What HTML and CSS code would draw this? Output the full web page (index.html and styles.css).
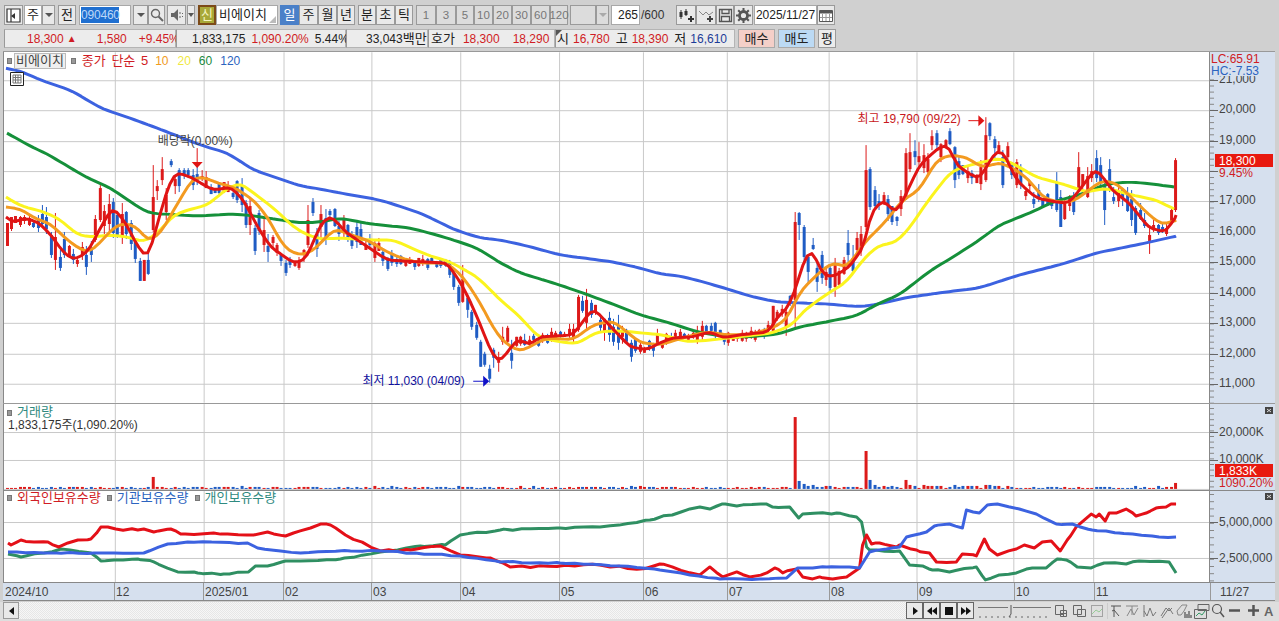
FILE: index.html
```html
<!DOCTYPE html>
<html lang="ko">
<head>
    <meta charset="UTF-8">
    <title>비에이치 차트</title>
    <link rel="stylesheet" href="styles.css">
</head>
<body>
  <div class="toolbar">
    <button class="btn w19"><svg width="15" height="15" viewBox="0 0 15 15"><path d="M1 1h13v13H1zM5 1v13" fill="#fff" stroke="#333" stroke-width="1.200"/><path d="M9 5l-4 3 4 3z" fill="#333"/></svg></button>
    <div class="box w18 ml1 ko">주</div>
    <button class="btn w13"><span class="caret"></span></button>
    <button class="btn w18 ml3 ko">전</button>
    <div class="box code ml3"><span class="selected">090460</span></div>
    <button class="btn w15 ml2"><span class="caret"></span></button>
    <button class="btn w17"><svg width="14" height="14" viewBox="0 0 14 14"><circle cx="5.500" cy="5.500" r="4" fill="none" stroke="#666" stroke-width="1.400"/><path d="M8.500 8.500l4.500 4.500" stroke="#666" stroke-width="2"/></svg></button>
    <button class="btn w19 ml2"><svg width="14" height="14" viewBox="0 0 14 14"><path d="M1 5h3l4-4v12l-4-4H1z" fill="#666"/><path d="M10 4v2M10 8v2M12.500 5v1M12.500 8v1" stroke="#666"/></svg></button>
    <button class="btn w8 ml1"><span class="caret small"></span></button>
    <div class="sin ml3 ko">신</div>
    <div class="box name ko">비에이치<span class="corner"></span></div>
    <button class="btn w19 ml2 active ko">일</button>
    <button class="btn w19 ko">주</button>
    <button class="btn w19 ko">월</button>
    <button class="btn w18 ko">년</button>
    <button class="btn w18 ml3 ko">분</button>
    <button class="btn w19 ko">초</button>
    <button class="btn w18 ko">틱</button>
    <button class="btn w20 ml3 off">1</button>
    <button class="btn w20 off">3</button>
    <button class="btn w18 off">5</button>
    <button class="btn w19 off">10</button>
    <button class="btn w19 off">20</button>
    <button class="btn w19 off">30</button>
    <button class="btn w19 off">60</button>
    <button class="btn w18 off">120</button>
    <div class="btn w26 ml2 off"></div>
    <button class="btn w13 off"><span class="caret pale"></span></button>
    <div class="box count ml2">265</div>
    <span class="total">/600</span>
    <button class="btn w20 ml11"><svg width="16" height="15" viewBox="0 0 16 15"><path d="M3 2v9M8 1v7" stroke="#333"/><path d="M1.500 4h3v5h-3zM6.500 3h3v4h-3z" fill="#333"/><path d="M13 8v6M10 11h6" stroke="#333" stroke-width="2"/></svg></button>
    <button class="btn w20"><svg width="16" height="15" viewBox="0 0 16 15"><path d="M1 3l4 4 3-3 3 3 4-3" fill="none" stroke="#888"/><path d="M12 8v6M9 11h6" stroke="#444" stroke-width="2"/></svg></button>
    <button class="btn w18"><svg width="15" height="15" viewBox="0 0 15 15"><path d="M1.500 1.500h12v12h-12zM4 1.500v4h7v-4M3.500 13.500v-5h8v5" fill="none" stroke="#555" stroke-width="1.300"/></svg></button>
    <button class="btn w19"><svg width="15" height="15" viewBox="0 0 15 15"><circle cx="7.500" cy="7.500" r="4" fill="none" stroke="#555" stroke-width="2.800"/><path d="M7.500 0v3M7.500 12v3M0 7.500h3M12 7.500h3M2.200 2.200l2 2M10.800 10.800l2 2M12.800 2.200l-2 2M4.200 10.800l-2 2" stroke="#555" stroke-width="2"/></svg></button>
    <div class="box date ml1">2025/11/27</div>
    <button class="btn w18"><svg width="14" height="13" viewBox="0 0 14 13"><path d="M.5 1.500h13v11H.5z" fill="#fff" stroke="#555"/><path d="M.5 2h13v2.500H.5z" fill="#555"/><path d="M3.500 5v7M7 5v7M10.500 5v7M1 8.500h12" stroke="#999"/></svg></button>
  </div>

  <div class="quotes">
    <div class="cell price-cell">
      <span class="red v1">18,300</span><span class="red tri">▲</span><span class="red v2">1,580</span><span class="red v3">+9.45%</span>
    </div>
    <div class="cell volume-cell">
      <span class="v4">1,833,175</span><span class="red v5">1,090.20%</span><span class="v6">5.44%</span>
    </div>
    <div class="cell money-cell"><span class="v7">33,043<span class="ko">백만</span></span></div>
    <div class="cell ask-cell">
      <span class="v8 ko">호가</span><span class="red v9">18,300</span><span class="red v10">18,290</span>
    </div>
    <div class="cell ohlc-cell">
      <span class="mark"></span><span class="v11 ko">시</span><span class="red v12">16,780</span><span class="v13 ko">고</span><span class="red v12">18,390</span><span class="v13 ko">저</span><span class="navy v12">16,610</span>
    </div>
    <button class="trade buy ko">매수</button>
    <button class="trade sell ko">매도</button>
    <button class="btn w18 ml3 plain ko">평</button>
  </div>

  <div class="chart">
    <div class="panel price-panel">
      <div class="plot">
        <svg id="price-plot" class="plot-svg"></svg>
        <div class="legend">
          <span class="dot"></span><span class="legend-name ko">비에이치</span><span class="dot ml5"></span>
          <span class="red ml6 ko spaced">종가 단순 5</span><span class="orange ml7">10</span><span class="yellow ml9">20</span><span class="green ml8">60</span><span class="blue ml8">120</span>
        </div>
        <div class="grid-icon">
          <svg width="14" height="14" viewBox="0 0 14 14"><path d="M.5.500h13v13H.5z" fill="#fff" stroke="#222"/><path d="M3 3h8v8H3zM3 5.500h8M3 8h8M5.500 3v8M8 3v8" fill="none" stroke="#777"/></svg>
        </div>
      </div>
      <div class="axis"><svg id="price-axis" class="axis-svg"></svg></div>
    </div>
    <div class="panel volume-panel">
      <div class="plot">
        <svg id="volume-plot" class="plot-svg"></svg>
        <div class="legend volume-legend">
          <div><span class="dot"></span><span class="teal ml5 ko">거래량</span></div>
          <div class="volume-value">1,833,175주(1,090.20%)</div>
        </div>
      </div>
      <div class="axis"><svg id="volume-axis" class="axis-svg"></svg></div>
    </div>
    <div class="panel holdings-panel">
      <div class="plot">
        <svg id="holdings-plot" class="plot-svg"></svg>
        <div class="legend holdings-legend">
          <span class="dot"></span><span class="red ml5 ko">외국인보유수량</span>
          <span class="dot ml6"></span><span class="blue ml5 ko">기관보유수량</span>
          <span class="dot ml6"></span><span class="teal ml5 ko">개인보유수량</span>
        </div>
      </div>
      <div class="axis"><svg id="holdings-axis" class="axis-svg"></svg></div>
    </div>
    <div class="panel dates-panel">
      <svg id="dates" class="dates-svg"></svg>
    </div>
  </div>

  <div class="scroller">
    <button class="btn scroll-left"><span class="tri-left"></span></button>
    <div class="track"></div>
    <button class="btn play"><svg width="10" height="10" viewBox="0 0 10 10"><path d="M3 1l5 4-5 4z" fill="#111"/></svg></button>
    <button class="btn play"><svg width="10" height="10" viewBox="0 0 10 10"><path d="M5 1L0 5l5 4zM10 1L5 5l5 4z" fill="#111"/></svg></button>
    <button class="btn play"><svg width="10" height="10" viewBox="0 0 10 10"><path d="M1 1h8v8H1z" fill="#111"/></svg></button>
    <button class="btn play"><svg width="10" height="10" viewBox="0 0 10 10"><path d="M0 1l5 4-5 4zM5 1l5 4-5 4z" fill="#111"/></svg></button>
    <svg class="slider" width="76" height="18" viewBox="0 0 76 18">
      <path d="M0 5.500h30M35 5.500h38" stroke="#777"/><path d="M33 3v9l-2 3" fill="none" stroke="#555"/>
      <path d="M2 14v2M8 14v2M14 14v2M20 14v2M26 14v2M32 14v2M38 14v2M44 14v2M50 14v2M56 14v2M62 14v2M68 14v2" stroke="#666"/>
    </svg>
    <svg class="tools" width="222" height="18" viewBox="0 0 222 18">
      <g fill="none" stroke="#666">
        <path d="M1.500 3.500h8v9h-8zM6.500 8.500h6v6h-6zM9.500 8.500v6M6.500 11.500h6"/>
        <path d="M19.500 3.500h8v9h-8zM23.500 7.500h8v7h-8z"/>
        <path d="M37.500 3.500h11v11h-11z" stroke-dasharray="1 1"/><path d="M38 12l4-4 3 2 3-3" stroke="#9c9"/>
        <path d="M53.500 1v16" stroke="#ccc"/>
        <path d="M57 4h10M60 4v11M60 8l5 6M60 8l-2 1" stroke="#555"/>
        <path d="M72 4h12M73 14l4-7 3 6 4-7M78 4v9" stroke="#888"/>
        <path d="M90 15V3M90 9l3 5 3-8 3 8 3-4" stroke="#777"/>
        <path d="M107 14l5-8 3 3 3-3M108 16l7-10 4 6" stroke="#777"/>
        <path d="M123 9l5-6h5l-3 6-3 4h-3z" stroke="#888"/><path d="M131 10v6M133 12v4M135 9v7M137 13v3" stroke="#333"/>
        <path d="M144 2.500h11v6h-11zM140.500 7.500h12v9h-12z" stroke="#666"/><path d="M142 14l3-3 3 2 3-4" stroke="#396"/>
        <circle cx="163" cy="7" r="4.500" stroke="#555" stroke-width="1.200"/><path d="M166 10l4 5" stroke="#555" stroke-width="1.500"/>
      </g>
      <path d="M175 8.500h11M194 8.500h11M199.500 3v11" stroke="#555" stroke-width="2.500" fill="none"/>
      <text x="210" y="14" class="tool-a">A</text>
    </svg>
  </div>
  <script src="chart.js"></script>
</body>
</html>
```

FILE: styles.css
```css
* {
  box-sizing: border-box;
}
html, body {
  margin: 0;
  height: 621px;
  overflow: hidden;
}
body {
  background: #d0d0d0;
  font-family: "Liberation Sans", "Noto Sans CJK KR", sans-serif;
  font-size: 12px;
  color: #222;
}
button {
  font: inherit;
  color: inherit;
}
.ko {
  font-size: 13px;
  line-height: 14px;
}
.toolbar {
  display: flex;
  height: 20px;
  margin: 5px 0 0 4px;
}
.btn {
  display: flex;
  align-items: center;
  justify-content: center;
  height: 20px;
  padding: 0;
  background: #e9e9e9;
  border: 1px solid #9a9a9a;
  border-radius: 0;
  font-size: 12px;
  flex: none;
}
.btn.ko {
  font-size: 13px;
}
.box {
  display: flex;
  align-items: center;
  justify-content: center;
  height: 20px;
  background: #fff;
  border: 1px solid #a8a8a8;
  flex: none;
}
.w8 { width: 8px; }
.w13 { width: 13px; }
.w15 { width: 15px; }
.w17 { width: 17px; }
.w18 { width: 18px; }
.w19 { width: 19px; }
.w20 { width: 20px; }
.w26 { width: 26px; }
.ml1 { margin-left: 1px; }
.ml2 { margin-left: 2px; }
.ml3 { margin-left: 3px; }
.ml4 { margin-left: 4px; }
.ml5 { margin-left: 5px; }
.ml6 { margin-left: 6px; }
.ml7 { margin-left: 7px; }
.ml8 { margin-left: 8px; }
.ml9 { margin-left: 9px; }
.ml11 { margin-left: 11px; }
.spaced {
  word-spacing: 2px;
}
.caret {
  width: 0;
  height: 0;
  border-left: 4px solid transparent;
  border-right: 4px solid transparent;
  border-top: 4px solid #555;
}
.caret.small {
  border-left-width: 3px;
  border-right-width: 3px;
}
.caret.pale {
  border-top-color: #aaa;
}
.code {
  width: 52px;
  justify-content: flex-start;
  padding-left: 1px;
}
.selected {
  background: #1f6fd0;
  color: #bcd8f8;
  width: 38px;
  line-height: 16px;
  letter-spacing: -0.200px;
}
.sin {
  width: 18px;
  height: 20px;
  background: #a8a838;
  border: 2px solid #7c4a18;
  color: #f4f4c0;
  text-align: center;
  line-height: 16px;
  flex: none;
}
.name {
  position: relative;
  width: 62px;
  justify-content: flex-start;
  padding-left: 2px;
}
.corner {
  position: absolute;
  right: 1px;
  bottom: 1px;
  width: 0;
  height: 0;
  border-left: 7px solid transparent;
  border-bottom: 7px solid #bbb;
}
.active {
  background: #4a80c8;
  border-color: #4a80c8;
  color: #fff;
}
.off {
  background: #dcdcdc;
  color: #777;
  font-size: 11.500px;
}
.count {
  width: 29px;
  justify-content: flex-end;
  padding-right: 1px;
}
.total {
  width: 25px;
  line-height: 20px;
  color: #333;
  padding-left: 1px;
}
.date {
  width: 63px;
}
.quotes {
  display: flex;
  height: 19px;
  margin: 4px 0 0 4px;
}
.cell {
  display: flex;
  align-items: center;
  height: 19px;
  background: #ececec;
  border: 1px solid #b4b4b4;
  border-left-color: #999;
  flex: none;
  white-space: nowrap;
}
.cell span {
  flex: none;
}
.price-cell { width: 172px; }
.volume-cell { width: 170px; }
.money-cell { width: 82px; }
.ask-cell { width: 127px; }
.ohlc-cell { width: 180px; position: relative; }
.v1 { margin-left: 22px; }
.tri { margin-left: 3px; font-size: 10px; width: 11px; }
.v2 { margin-left: 19px; }
.v3 { margin-left: 12px; }
.v4 { margin-left: 15px; }
.v5 { margin-left: 6px; }
.v6 { margin-left: 6px; }
.v7 { margin-left: 19px; }
.v8 { margin-left: 2px; }
.v9 { margin-left: 8px; }
.v10 { margin-left: 13px; }
.v11 { margin-left: 1px; }
.v12 { margin-left: 4px; }
.v13 { margin-left: 6px; }
.mark {
  position: absolute;
  left: 0;
  top: 0;
  width: 0;
  height: 0;
  border-top: 6px solid #555;
  border-right: 6px solid transparent;
}
.trade {
  height: 19px;
  width: 37px;
  margin-left: 3px;
  padding: 0;
  border: 1px solid #aaa;
  flex: none;
}
.buy { background: #f4cfc8; }
.sell { background: #bcdaf4; }
.plain {
  height: 19px;
  background: #ececec;
}
.red { color: #d01c24; }
.navy { color: #1c3c98; }
.orange { color: #f09a1c; }
.yellow { color: #f0e840; }
.green { color: #1a8a40; }
.blue { color: #2c64c0; }
.teal { color: #2f8a80; }

.chart {
  margin: 3px 4px 0 3px;
  border-top: 1px solid #999;
  background: #fff;
}
.panel {
  display: flex;
}
.price-panel { height: 352px; border-bottom: 1px solid #999; }
.volume-panel { height: 87px; border-bottom: 1px solid #888; }
.holdings-panel { height: 92px; border-bottom: 1px solid #888; }
.dates-panel { height: 18px; border-bottom: 1px solid #888; }
.plot {
  position: relative;
  flex: 1;
  border-left: 1px solid #888;
  overflow: hidden;
}
.plot-svg {
  display: block;
  width: 100%;
  height: 100%;
}
.axis {
  width: 66px;
  background: #d6e0ee;
  border-left: 1px solid #888;
  flex: none;
}
.axis-svg {
  display: block;
  width: 100%;
  height: 100%;
}
.dates-svg {
  display: block;
  width: 100%;
  height: 100%;
  background: #d6e0ee;
}
.legend {
  position: absolute;
  left: 3px;
  top: 1px;
  display: flex;
  align-items: center;
  white-space: nowrap;
}
.dot {
  display: inline-block;
  width: 5px;
  height: 6px;
  background: #999;
  border: 1px solid #777;
  flex: none;
}
.legend-name {
  margin-left: 2px;
  padding: 0 1px;
  background: #efefef;
  border: 1px solid #bbb;
  color: #444;
}
.grid-icon {
  position: absolute;
  left: 6px;
  top: 20px;
  line-height: 0;
}
.volume-legend {
  display: block;
  top: 1px;
  line-height: 13px;
}
.volume-value {
  margin-left: 1px;
  color: #333;
}
.holdings-legend {
  top: 0;
}
svg text {
  font-family: "Liberation Sans", "Noto Sans CJK KR", sans-serif;
  font-size: 12px;
}
.tick-label { fill: #444; }
.tag-label { fill: #fff; }
.lc-label { fill: #d01c24; }
.hc-label { fill: #2c64c0; }
.date-label { fill: #444; }
.note-gray { fill: #444; }
.note-red { fill: #c81820; }
.note-navy { fill: #10109c; }
svg text.note-big {
  font-size: 13px;
}
svg text.tool-a {
  fill: #666;
  font-weight: bold;
  font-size: 13px;
}

.scroller {
  display: flex;
  align-items: flex-start;
  height: 20px;
  margin-top: 1px;
  padding-left: 3px;
  background: #dedede;
}
.scroll-left {
  width: 16px;
  height: 17px;
}
.tri-left {
  width: 0;
  height: 0;
  border-top: 4px solid transparent;
  border-bottom: 4px solid transparent;
  border-right: 5px solid #111;
}
.track {
  width: 887px;
  height: 17px;
  background: repeating-conic-gradient(#e6e6e6 0 25%, #f6f6f6 0 50%) 0 0 / 2px 2px;
}
.play {
  width: 17px;
  height: 17px;
  border-color: #666;
}
.slider {
  margin-left: 4px;
  flex: none;
}
.tools {
  flex: none;
}
```

FILE: chart.js
```js
const NS = "http://www.w3.org/2000/svg";

// price panel lines, page coordinates read off the screen
const ma120 = [[5,68],[20,71],[40,80],[70,90],[100,108],[135,120],[167,132],[200,145],[227,153],[253,170],[283,180],[300,186],[320,189],[340,193],[380,200],[420,213],[455,230],[480,238],[500,240],[527,246],[560,255],[613,262],[640,268],[660,274],[680,276],[707,283],[727,289],[753,297],[777,302],[797,303],[827,304],[860,307],[880,304],[905,298],[940,293],[980,288],[1020,275],[1040,270],[1067,263],[1097,253],[1147,243],[1177,236]];
const ma60 = [[6,133],[33,148],[43,152],[70,168],[87,178],[110,188],[127,200],[147,213],[197,216],[230,214],[247,215],[267,218],[300,223],[320,222],[340,218],[370,224],[410,228],[440,236],[453,240],[477,248],[500,263],[520,273],[553,283],[580,292],[607,302],[640,315],[673,324],[697,332],[727,337],[750,337],[780,334],[800,327],[827,322],[857,316],[880,303],[900,295],[915,283],[932,270],[957,255],[980,240],[1000,225],[1033,212],[1053,202],[1080,195],[1107,184],[1127,182],[1147,183],[1175,187]];
const ma20 = [[5,197],[20,206],[40,211],[57,218],[77,235],[90,237],[110,235],[127,237],[143,242],[157,233],[173,215],[187,210],[207,205],[227,188],[240,183],[253,193],[273,208],[293,227],[307,235],[320,239],[340,238],[370,240],[393,240],[427,255],[450,262],[477,277],[500,300],[520,317],[533,332],[540,338],[560,342],[577,344],[597,332],[620,331],[640,333],[663,335],[687,342],[713,340],[740,337],[773,333],[793,325],[803,312],[823,297],[847,282],[863,260],[878,246],[897,242],[910,228],[927,203],[950,173],[963,167],[983,162],[1000,158],[1013,163],[1037,177],[1067,185],[1087,192],[1107,188],[1133,195],[1157,200],[1175,209]];
const ma10 = [[5,207],[20,209],[33,218],[50,224],[63,237],[77,248],[88,253],[100,242],[113,227],[123,223],[137,227],[147,242],[160,233],[173,210],[192,178],[203,177],[217,183],[233,187],[253,200],[267,217],[283,247],[297,255],[310,253],[320,243],[335,228],[350,235],[367,240],[383,250],[400,258],[420,263],[447,263],[463,277],[480,303],[493,328],[503,342],[520,352],[533,345],[547,338],[573,340],[593,325],[613,321],[633,337],[640,343],[660,345],[683,338],[707,332],[727,335],[750,335],[773,328],[787,320],[800,292],[817,275],[833,262],[847,268],[867,240],[883,225],[903,200],[920,190],[937,160],[950,155],[967,157],[983,168],[1000,162],[1017,170],[1030,180],[1043,197],[1057,202],[1073,202],[1090,190],[1103,180],[1117,183],[1133,198],[1150,215],[1163,225],[1177,220]];
const ma5 = [[5,217],[13,223],[23,218],[37,222],[50,235],[63,253],[73,260],[87,252],[100,227],[112,207],[125,223],[137,247],[147,258],[157,223],[167,187],[175,172],[190,177],[207,187],[213,190],[230,187],[243,200],[257,227],[270,247],[293,263],[305,260],[320,225],[330,215],[345,232],[357,240],[387,260],[400,261],[447,263],[463,287],[477,317],[490,350],[498,363],[507,353],[517,339],[530,345],[540,337],[573,335],[593,308],[607,323],[630,347],[647,350],[660,343],[673,338],[693,337],[710,332],[723,338],[740,335],[770,332],[777,317],[787,310],[797,287],[803,263],[812,249],[823,275],[833,277],[850,267],[867,242],[870,215],[883,200],[897,213],[907,193],[920,165],[940,147],[950,145],[955,163],[967,172],[980,179],[997,150],[1005,153],[1017,180],[1037,198],[1057,202],[1070,203],[1080,190],[1097,168],[1113,190],[1130,203],[1150,228],[1167,232],[1177,215]];

// holdings panel
const foreign = [[7,543],[10,545],[20,540],[33,542],[47,542],[58,547],[67,543],[77,540],[90,539],[100,527],[107,527],[115,529],[137,530],[143,529],[153,532],[170,529],[180,534],[200,534],[213,533],[227,534],[253,535],[267,532],[285,536],[293,533],[310,528],[320,524],[330,525],[345,535],[380,551],[410,550],[440,546],[460,555],[490,558],[510,567],[560,566],[600,565],[640,569],[660,564],[700,575],[710,567],[723,577],[737,572],[750,577],[767,573],[775,568],[783,573],[797,569],[803,577],[813,579],[820,577],[833,579],[847,577],[860,568],[863,545],[867,535],[872,544],[880,543],[897,547],[900,545],[917,550],[930,553],[937,562],[957,562],[963,554],[977,556],[985,539],[990,549],[998,555],[1017,549],[1025,545],[1035,548],[1043,542],[1052,541],[1061,551],[1068,540],[1077,527],[1092,514],[1097,517],[1100,514],[1106,521],[1110,513],[1117,513],[1127,509],[1137,516],[1147,513],[1157,508],[1167,507],[1172,504],[1177,504]];
const institution = [[7,552],[43,553],[93,553],[143,553],[167,544],[187,542],[247,543],[257,548],[280,551],[300,553],[350,551],[380,551],[460,556],[500,562],[560,563],[620,566],[660,570],[690,575],[720,579],[760,579],[787,578],[798,568],[813,568],[827,567],[860,568],[870,552],[887,549],[900,547],[907,537],[927,532],[935,526],[950,524],[963,528],[967,510],[980,513],[988,505],[998,504],[1020,509],[1037,514],[1057,524],[1073,524],[1093,530],[1120,533],[1153,536],[1160,537],[1177,537]];
const retail = [[7,554],[20,557],[43,553],[60,549],[90,553],[100,561],[137,559],[153,562],[177,572],[197,573],[223,574],[248,572],[255,566],[267,566],[285,561],[300,561],[340,559],[380,552],[420,546],[445,545],[460,535],[500,530],[560,528],[600,527],[650,520],[700,507],[710,509],[722,504],[737,506],[767,504],[773,507],[790,507],[799,518],[803,514],[837,513],[857,517],[862,522],[867,547],[870,550],[900,551],[910,565],[923,566],[933,570],[950,572],[977,567],[986,580],[1000,575],[1017,573],[1033,568],[1047,568],[1058,559],[1067,560],[1078,567],[1092,568],[1105,563],[1127,564],[1140,561],[1170,562],[1177,573]];

// candles that stand out: x, body top, body bottom, wick top, wick bottom, up?
const bigCandles = [
  [6,223,246,223,246,1],[50,235,255,232,258,0],[54,237,260,213,270,1],[59,257,268,250,271,0],[95,219,240,215,242,1],[100,188,220,185,222,1],
  [113,202,233,198,238,0],[117,215,235,212,238,0],[138,261,281,258,281,0],[143,260,281,260,281,1],[152,197,230,165,232,1],[156,186,191,180,200,1],
  [162,169,180,157,185,1],[170,161,165,159,167,0],[178,170,186,168,192,0],[245,203,225,200,228,0],[254,228,251,225,255,0],[285,263,273,260,276,0],
  [307,220,245,205,248,1],[312,202,213,198,216,0],[449,263,275,260,278,0],[453,273,287,270,290,0],[459,287,303,285,306,0],[467,298,310,296,318,0],
  [472,312,327,310,330,0],[475,325,338,322,340,0],[480,342,367,340,367,0],[484,354,365,352,367,0],[489,369,379,365,383,0],[493,350,358,348,368,0],
  [498,358,363,352,372,1],[503,337,342,327,345,1],[506,328,342,326,345,1],[577,297,330,295,332,1],[582,301,311,296,313,0],[592,303,315,300,318,0],
  [772,306,333,306,336,1],[795,222,300,212,330,1],[799,213,225,212,240,0],[803,227,257,225,262,0],[808,257,272,255,283,0],[817,268,282,262,292,0],
  [830,268,288,265,292,0],[834,265,287,258,297,1],[848,243,255,230,262,0],[857,238,250,232,256,1],[866,170,227,145,230,1],[870,169,207,167,210,0],
  [874,190,206,186,208,0],[905,153,197,148,200,1],[910,152,169,133,172,1],[914,151,157,140,165,0],[932,136,145,130,150,1],[936,133,145,130,150,0],
  [954,147,180,146,188,0],[986,135,180,117,182,1],[990,123,136,122,140,0],[994,139,148,136,160,0],[1003,157,185,150,188,0],[1057,183,210,172,212,0],
  [1062,197,227,190,227,0],[1066,203,219,198,220,1],[1078,167,188,152,192,1],[1096,158,178,150,182,0],[1105,185,210,178,225,0],[1136,208,233,206,235,0],
  [1150,235,241,228,254,1],[1172,210,222,208,225,1],[1177,160,210,158,212,1]
];
const bigVolumes = { 152: 12, 796: 72, 800: 8, 804: 5, 866: 38, 870: 9, 874: 4, 884: 3, 906: 9, 910: 4, 986: 4, 1176: 6 };

const RED = "#e01414";
const CANDLE_RED = "#dc1a1a";
const CANDLE_BLUE = "#1f5cc4";
const GRID = "#c9c9c9";
const MONTHS = [114, 203, 283, 371, 460, 559, 643, 727, 829, 917, 1014, 1094];
const STEP = 4.435;

function make(tag, attrs, parent, text) {
  const el = document.createElementNS(NS, tag);
  for (const key in attrs) el.setAttribute(key, attrs[key]);
  if (text) el.textContent = text;
  parent.appendChild(el);
  return el;
}

function line(parent, x1, y1, x2, y2, color, width) {
  make("line", { x1, y1, x2, y2, stroke: color, "stroke-width": width || 1 }, parent);
}

function polyline(parent, points, color, width) {
  make("polyline", {
    points: points.map(p => p.join(",")).join(" "),
    fill: "none",
    stroke: color,
    "stroke-width": width,
    "stroke-linejoin": "round"
  }, parent);
}

function label(parent, x, y, text, cls) {
  make("text", { x, y, class: cls }, parent, text);
}

function setView(id, x, y, w, h) {
  const svg = document.getElementById(id);
  svg.setAttribute("viewBox", x + " " + y + " " + w + " " + h);
  return svg;
}

function interp(points, x) {
  if (x <= points[0][0]) return points[0][1];
  for (let i = 1; i < points.length; i++) {
    if (x <= points[i][0]) {
      const a = points[i - 1], b = points[i];
      return a[1] + (b[1] - a[1]) * (x - a[0]) / (b[0] - a[0]);
    }
  }
  return points[points.length - 1][1];
}

// fixed seed, so the picture is the same on every load
let seed = 90460;
function rnd() {
  seed = (seed * 16807) % 2147483647;
  return seed / 2147483647;
}

// one sample per candle, rounded off with a 1-2-1 filter
function smooth(points, passes) {
  const first = points[0][0], last = points[points.length - 1][0];
  let out = [];
  for (let x = first; x < last; x += STEP) out.push([x, interp(points, x)]);
  out.push([last, points[points.length - 1][1]]);
  for (let p = 0; p < passes; p++) {
    out = out.map((pt, i) => {
      if (i === 0 || i === out.length - 1) return pt;
      return [pt[0], (out[i - 1][1] + 2 * pt[1] + out[i + 1][1]) / 4];
    });
  }
  return out.map(pt => [+pt[0].toFixed(1), +pt[1].toFixed(1)]);
}

// keeps the sharp points, adds the day to day wobble between them
function wobble(points, size) {
  const xs = points.map(p => p[0]);
  for (let x = points[0][0]; x < points[points.length - 1][0]; x += STEP * 2) {
    if (!xs.some(k => Math.abs(k - x) < 3)) xs.push(+x.toFixed(1));
  }
  xs.sort((a, b) => a - b);
  return xs.map(x => {
    const known = points.some(p => p[0] === x);
    return [x, +(interp(points, x) + (known ? 0 : (rnd() - 0.5) * size)).toFixed(1)];
  });
}

function grid(svg, rows, top, bottom) {
  rows.forEach(y => line(svg, 3, y + 0.5, 1210, y + 0.5, GRID));
  MONTHS.forEach(x => line(svg, x + 0.5, top, x + 0.5, bottom, GRID));
}

function buildCandles() {
  const list = [];
  for (let i = 0; i < 265; i++) {
    const x = Math.round(5.5 + i * STEP);
    const big = bigCandles.find(c => Math.abs(c[0] - x) <= 2);
    if (big) {
      list.push({ x, top: big[1], bottom: big[2], high: big[3], low: big[4], up: !!big[5] });
      continue;
    }
    const slope = interp(ma5, x + 6) - interp(ma5, x - 6);
    const amp = 0.7 + Math.min(Math.abs(slope) / 8, 2.2);
    const mid = interp(ma5, x) + (rnd() - 0.5) * 8 * amp;
    const size = 1.5 + rnd() * 4 * amp;
    const top = Math.round(mid - size), bottom = Math.round(mid + size);
    list.push({
      x, top, bottom,
      high: top - Math.round(rnd() * 5 * amp),
      low: bottom + Math.round(rnd() * 4 * amp),
      up: slope < 0 ? rnd() < 0.7 : rnd() < 0.35
    });
  }
  return list;
}

function drawPrice(candles) {
  const svg = setView("price-plot", 3, 52, 1207, 351);
  grid(svg, [80, 110, 141, 171, 201, 232, 262, 293, 323, 354, 384], 52, 403);

  candles.forEach(c => {
    const color = c.up ? CANDLE_RED : CANDLE_BLUE;
    line(svg, c.x + 0.5, c.high, c.x + 0.5, c.low, color);
    make("rect", { x: c.x - 1, y: c.top, width: 3, height: Math.max(c.bottom - c.top, 2), fill: color }, svg);
  });

  polyline(svg, smooth(ma120, 3), "#3c62e0", 3);
  polyline(svg, smooth(ma60, 3), "#15903a", 3);
  polyline(svg, smooth(ma20, 2), "#fbf41e", 3);
  polyline(svg, smooth(ma10, 2), "#f39a20", 3);
  polyline(svg, smooth(ma5, 1), RED, 3);

  label(svg, 157, 145, "배당락(0.00%)", "note-gray");
  line(svg, 196.5, 148, 196.5, 163, RED);
  make("path", { d: "M191 162h11l-5.500 6z", fill: RED }, svg);

  label(svg, 858, 123, "최고 19,790 (09/22)", "note-red");
  line(svg, 969, 120.5, 980, 120.5, RED);
  make("path", { d: "M979 115v11l6-5.500z", fill: RED }, svg);

  label(svg, 362, 385, "최저 11,030 (04/09)", "note-navy");
  line(svg, 473, 381.5, 484, 381.5, "#1010c8");
  make("path", { d: "M483 376v11l6-5.500z", fill: "#1010c8" }, svg);
}

function drawVolume(candles) {
  const svg = setView("volume-plot", 3, 404, 1207, 86);
  grid(svg, [432, 460, 489], 404, 490);
  candles.forEach(c => {
    const key = Object.keys(bigVolumes).find(k => Math.abs(k - c.x) <= 2);
    const active = c.x > 790 && c.x < 1000 ? 2 : 0;
    const h = key ? bigVolumes[key] : 1 + Math.round(rnd() * (rnd() < 0.2 ? 2 : 1)) + Math.round(rnd() * active);
    make("rect", { x: c.x - 1, y: 489 - h, width: 3, height: h, fill: c.up ? CANDLE_RED : CANDLE_BLUE }, svg);
  });
}

function drawHoldings() {
  const svg = setView("holdings-plot", 3, 491, 1207, 91);
  grid(svg, [522, 558], 491, 582);
  polyline(svg, wobble(retail, 1.6), "#2f8f62", 3);
  polyline(svg, wobble(foreign, 2), "#e41018", 3);
  polyline(svg, wobble(institution, 1.2), "#3c62e0", 3);
}

function ticks(svg, top, bottom, major, step) {
  for (let y = top; y < bottom; y += step) line(svg, 1210, y + 0.5, 1214, y + 0.5, "#888");
  major.forEach(y => line(svg, 1210, y + 0.5, 1218, y + 0.5, "#666"));
}

function drawAxes() {
  const price = setView("price-axis", 1210, 52, 65, 351);
  ticks(price, 55, 403, [80, 110, 141, 171, 201, 232, 262, 293, 323, 354, 384], 6.1);
  // 18,000 sits under the close tag, so it is left out
  const prices = [["21,000", 83], ["20,000", 113], ["19,000", 144], ["17,000", 204], ["16,000", 235], ["15,000", 265], ["14,000", 296], ["13,000", 326], ["12,000", 357], ["11,000", 387]];
  prices.forEach(p => label(price, 1219, p[1], p[0], "tick-label"));
  make("rect", { x: 1210, y: 52, width: 65, height: 24, fill: "#d6e0ee" }, price);
  label(price, 1211, 63, "LC:65.91", "lc-label");
  label(price, 1211, 75, "HC:-7.53", "hc-label");
  make("rect", { x: 1215, y: 154, width: 58, height: 13, fill: "#e8190f" }, price);
  label(price, 1219, 165, "18,300", "tag-label");
  label(price, 1219, 177, "9.45%", "lc-label");

  const volume = setView("volume-axis", 1210, 404, 65, 86);
  ticks(volume, 408, 490, [432, 460], 5.6);
  label(volume, 1219, 436, "20,000K", "tick-label");
  label(volume, 1219, 463, "10,000K", "tick-label");
  closeIcon(volume, 1265, 407);
  make("rect", { x: 1215, y: 464, width: 58, height: 13, fill: "#e8190f" }, volume);
  label(volume, 1219, 475, "1,833K", "tag-label");
  label(volume, 1219, 487, "1090.20%", "lc-label");

  const holdings = setView("holdings-axis", 1210, 491, 65, 91);
  ticks(holdings, 494, 582, [522, 558], 7.2);
  label(holdings, 1219, 526, "5,000,000", "tick-label");
  label(holdings, 1219, 562, "2,500,000", "tick-label");
  closeIcon(holdings, 1265, 493);
}

function closeIcon(svg, x, y) {
  make("rect", { x, y, width: 8, height: 7, fill: "#444" }, svg);
  make("path", { d: "M" + (x + 2) + " " + (y + 2) + "l4 3m0-3l-4 3", stroke: "#ddd" }, svg);
}

function drawDates() {
  const svg = setView("dates", 3, 583, 1272, 17);
  const names = ["12", "2025/01", "02", "03", "04", "05", "06", "07", "08", "09", "10", "11"];
  label(svg, 5, 596, "2024/10", "date-label");
  MONTHS.forEach((x, i) => {
    line(svg, x + 0.5, 583, x + 0.5, 600, "#999");
    label(svg, x + 2, 596, names[i], "date-label");
  });
  line(svg, 1210.5, 583, 1210.5, 600, "#999");
  label(svg, 1220, 596, "11/27", "date-label");
}

const candles = buildCandles();
drawPrice(candles);
drawVolume(candles);
drawHoldings();
drawAxes();
drawDates();
```
